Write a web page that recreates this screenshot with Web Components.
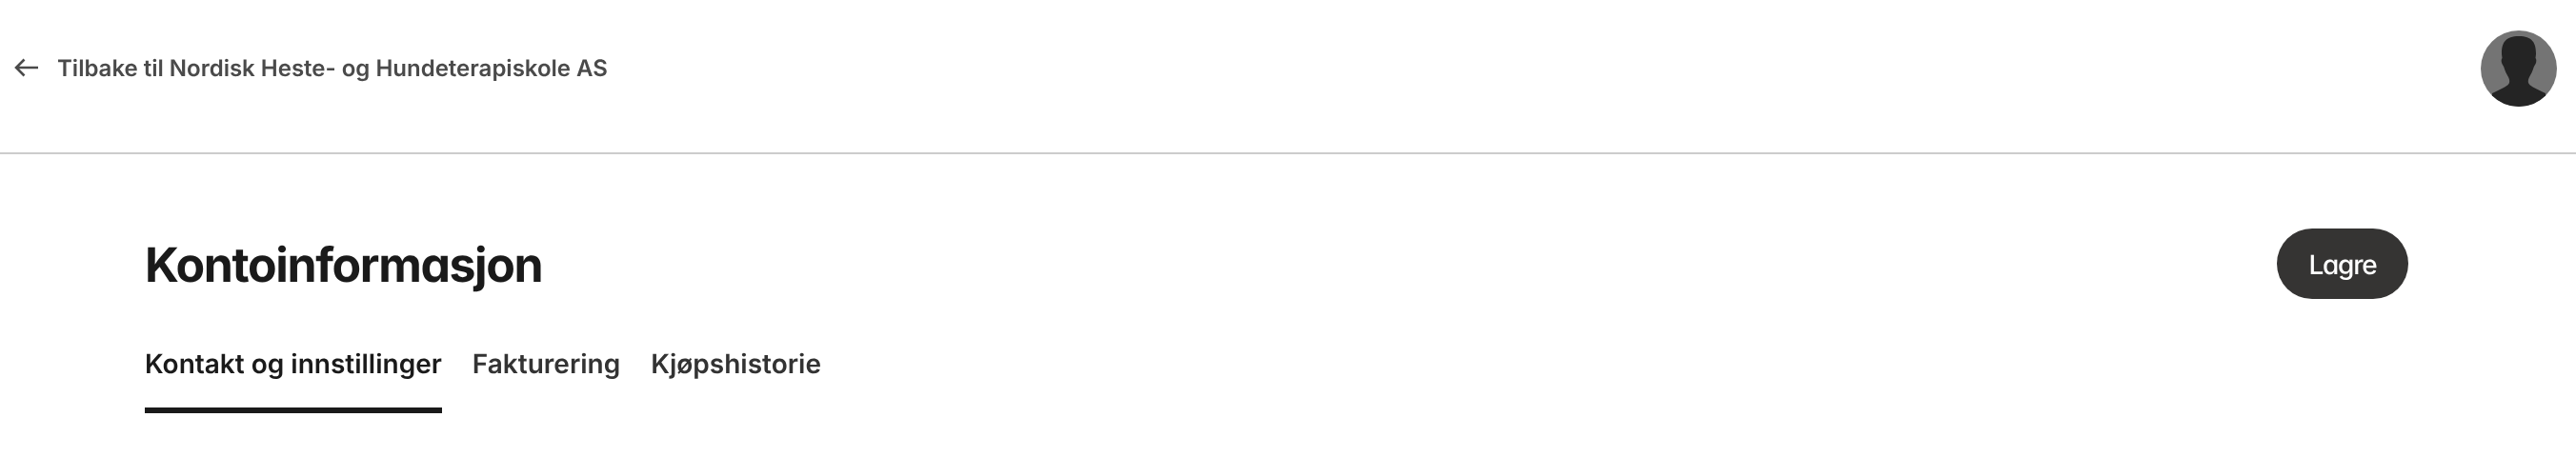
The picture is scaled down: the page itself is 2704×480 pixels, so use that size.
<!DOCTYPE html>
<html lang="no">
<head>
<meta charset="utf-8">
<title>Kontoinformasjon</title>
<style>
  html, body { margin: 0; background: #fff; }
  body { font-family: Inter, "Liberation Sans", sans-serif; overflow: hidden; text-rendering: geometricPrecision; }
</style>
</head>
<body>
<app-header>Tilbake til Nordisk Heste- og Hundeterapiskole AS</app-header>
<page-head>
  <span slot="title">Kontoinformasjon</span>
  <app-button slot="action">Lagre</app-button>
</page-head>
<tab-bar>
  <tab-item active>Kontakt og innstillinger</tab-item>
  <tab-item>Fakturering</tab-item>
  <tab-item>Kjøpshistorie</tab-item>
</tab-bar>

<script>
class AppHeader extends HTMLElement {
  constructor() {
    super();
    this.attachShadow({ mode: 'open' });
  }

  connectedCallback() {
    this.shadowRoot.innerHTML = `
      <a class="back">
        <svg width="26" height="20" viewBox="0 0 26 20" fill="none" stroke="#4a4a4a" stroke-width="2.6">
          <path d="M25 10H2M10.5 1.5 2 10l8.500 8.500"/>
        </svg>
        <slot></slot>
      </a>
      <user-avatar></user-avatar>

      <style>
        :host {
          display: flex;
          justify-content: space-between;
          align-items: center;
          height: 160px;
          padding: 0 20px 0 15px;
          border-bottom: 2px solid #ccc;
          will-change: transform;
        }

        .back {
          display: flex;
          align-items: center;
          gap: 19px;
          margin-bottom: 18px;
          font-size: 24px;
          font-weight: 600;
          color: #4a4a4a;
        }

        user-avatar { margin-bottom: 16px; }
      </style>
    `;
  }
}

class UserAvatar extends HTMLElement {
  constructor() {
    super();
    this.attachShadow({ mode: 'open' });
  }

  connectedCallback() {
    this.shadowRoot.innerHTML = `
      <svg width="80" height="80" viewBox="0 0 80 80">
        <clipPath id="c"><circle cx="40" cy="40" r="40"/></clipPath>
        <g clip-path="url(#c)">
          <rect width="80" height="80" fill="#747474"/>
          <path fill="#242424" d="M40 6C26 6 22 13 22 24c0 2 .5 4 .5 5-1 1-1 3-.5 5 .5 2 2 3 2.500 5 1 4 3 7 4.500 10 1 2 1.500 4 1 6-1 3-6 5-18 11v14h56V66c-12-6-17-8-18-11-.5-2 0-4 1-6 1.500-3 3.500-6 4.500-10 .5-2 2-3 2.500-5 .5-2 .5-4-.5-5 0-1 .5-3 .5-5C58 13 54 6 40 6z"/>
        </g>
      </svg>

      <style>
        :host { display: block; width: 80px; height: 80px; }
        svg { display: block; }
      </style>
    `;
  }
}

class PageHead extends HTMLElement {
  constructor() {
    super();
    this.attachShadow({ mode: 'open' });
  }

  connectedCallback() {
    this.shadowRoot.innerHTML = `
      <h1><slot name="title"></slot></h1>
      <slot name="action"></slot>

      <style>
        :host {
          display: flex;
          justify-content: space-between;
          align-items: flex-start;
          padding: 78px 176px 0 152px;
          will-change: transform;
        }

        h1 {
          margin: 5px 0 0;
          font-size: 50px;
          line-height: 69px;
          font-weight: 700;
          letter-spacing: -1.400px;
          font-feature-settings: "cv11";
          color: #1a1a1a;
        }
      </style>
    `;
  }
}

class AppButton extends HTMLElement {
  constructor() {
    super();
    this.attachShadow({ mode: 'open' });
  }

  connectedCallback() {
    this.shadowRoot.innerHTML = `
      <button><slot></slot></button>

      <style>
        :host { display: block; }

        button {
          display: block;
          width: 138px;
          height: 74px;
          border: 0;
          border-radius: 37px;
          background: #353433;
          color: #fff;
          font: 500 28px Inter, sans-serif;
          font-feature-settings: "cv11";
          letter-spacing: -1.200px;
          padding: 2px 0 0;
          text-rendering: geometricPrecision;
        }
      </style>
    `;
  }
}

class TabBar extends HTMLElement {
  constructor() {
    super();
    this.attachShadow({ mode: 'open' });
  }

  connectedCallback() {
    this.shadowRoot.innerHTML = `
      <slot></slot>

      <style>
        :host {
          display: flex;
          gap: 32px;
          padding: 48px 152px 0;
          will-change: transform;
        }
      </style>
    `;
  }
}

class TabItem extends HTMLElement {
  constructor() {
    super();
    this.attachShadow({ mode: 'open' });
  }

  connectedCallback() {
    this.shadowRoot.innerHTML = `
      <slot></slot>

      <style>
        :host {
          display: block;
          height: 66px;
          font-size: 28px;
          line-height: 40px;
          font-weight: 600;
          color: #333;
          border-bottom: 6px solid transparent;
        }

        :host([active]) {
          color: #1a1a1a;
          border-bottom-color: #1a1a1a;
        }
      </style>
    `;
  }
}

customElements.define('app-header', AppHeader);
customElements.define('user-avatar', UserAvatar);
customElements.define('page-head', PageHead);
customElements.define('app-button', AppButton);
customElements.define('tab-bar', TabBar);
customElements.define('tab-item', TabItem);
</script>
</body>
</html>
